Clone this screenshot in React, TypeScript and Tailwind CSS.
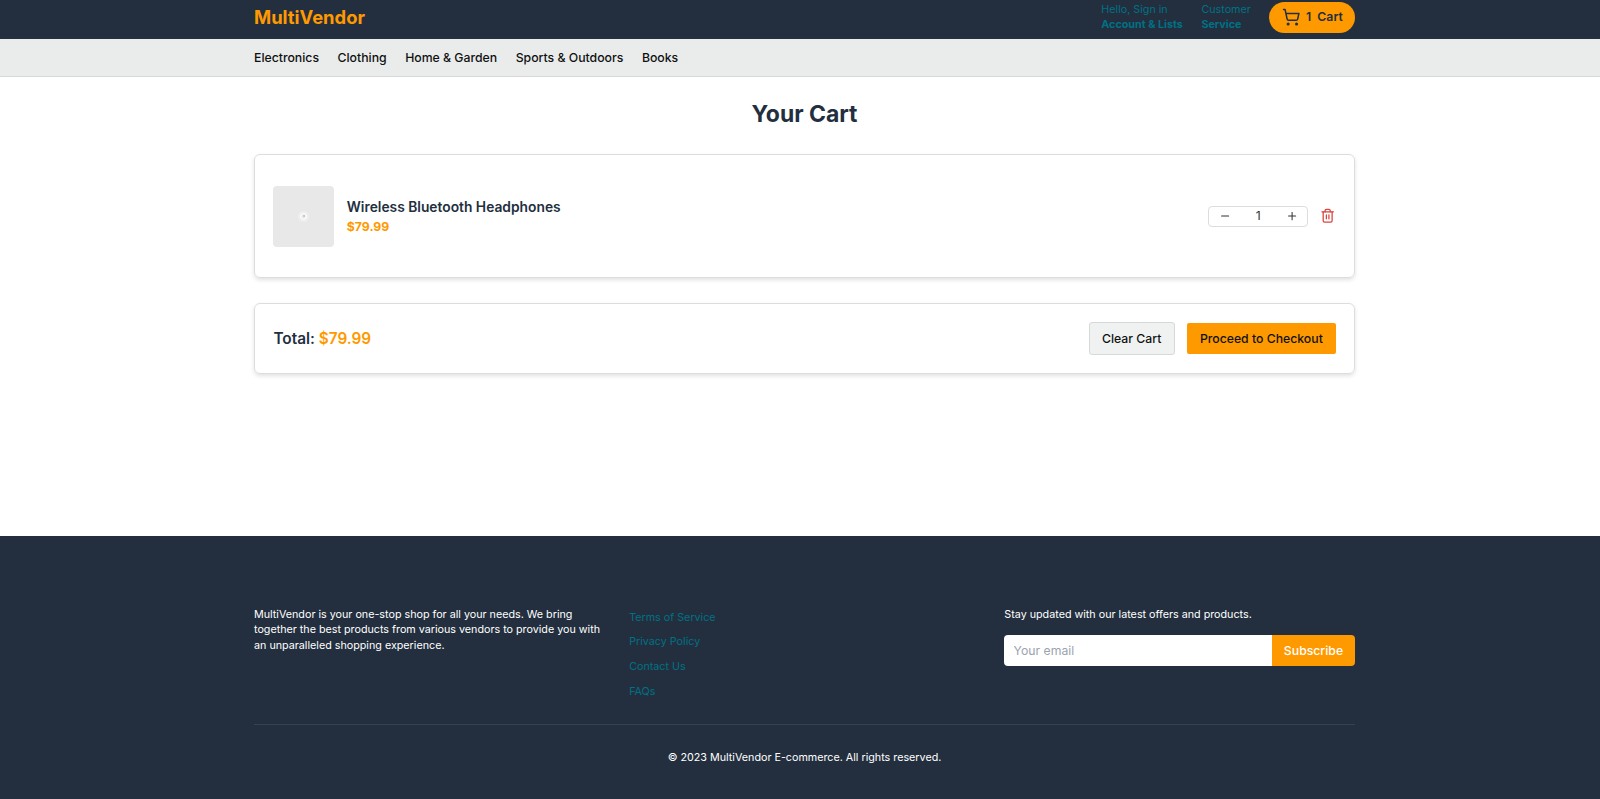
import { Minus, Plus, ShoppingCart, Trash2 } from 'lucide-react'
import React, { useState } from 'react'

const categories = [
  'Electronics',
  'Clothing',
  'Home & Garden',
  'Sports & Outdoors',
  'Books',
]

const footerLinks = ['Terms of Service', 'Privacy Policy', 'Contact Us', 'FAQs']

type ContainerProps = {
  className?: string
  children?: React.ReactNode
}

const Container = ({ className = '', children }: ContainerProps) => (
  <div className={`ml-[254px] w-[1101px] ${className}`}>{children}</div>
)

const Header = ({ count }: { count: number }) => (
  <header className="h-[38.5px] bg-[#232f3e]">
    <Container className="flex h-[34px] items-center justify-between">
      <a href="#" className="pt-[2px] text-[18.4px] font-bold text-[#ff9900]">
        MultiVendor
      </a>
      <div className="flex items-center gap-[18.6px] text-[10.74px] leading-[15.3px] text-[#007185]">
        <a href="#">
          <div>Hello, Sign in</div>
          <div className="font-bold">Account &amp; Lists</div>
        </a>
        <a href="#">
          <div>Customer</div>
          <div className="font-bold">Service</div>
        </a>
        <button className="flex h-[31px] items-center rounded-full bg-[#ff9900] px-[12.2px] text-[12.25px] font-semibold text-[#232f3e]">
          <ShoppingCart className="mr-[6.1px] size-[18.4px]" />
          <span className="mr-[6.1px]">{count}</span>
          <span>Cart</span>
        </button>
      </div>
    </Container>
  </header>
)

const CategoryNav = () => (
  <nav className="mt-[0.5px] h-[38px] border-b border-[#d5d9d9] bg-[#eaeceb]">
    <Container className="flex h-full items-center gap-[18.5px] pt-[1px] text-[12.27px] font-medium text-[#0f1111]">
      {categories.map((name) => (
        <a key={name} href="#">
          {name}
        </a>
      ))}
    </Container>
  </nav>
)

type QuantityProps = {
  value: number
  onChange: (value: number) => void
}

const Quantity = ({ value, onChange }: QuantityProps) => (
  <div className="flex h-[21px] w-[100px] items-center rounded-[4px] border border-[#dddddd] text-[#333333]">
    <button
      title="Decrease"
      onClick={() => onChange(Math.max(1, value - 1))}
      className="flex h-full w-[31px] items-center justify-center"
    >
      <Minus className="size-[12.2px]" />
    </button>
    <span className="flex-1 text-center text-[12.25px]">{value}</span>
    <button
      title="Increase"
      onClick={() => onChange(value + 1)}
      className="flex h-full w-[31px] items-center justify-center"
    >
      <Plus className="size-[12.2px]" />
    </button>
  </div>
)

const Footer = () => (
  <footer className="h-[263px] bg-[#232f3e] pt-[71px] text-[10.74px] leading-[15.3px] text-white">
    <Container>
      <div className="grid h-[118px] grid-cols-3 gap-[24.5px] border-b border-[#37475a]/80">
        <p>
          MultiVendor is your one-stop shop for all your needs. We bring
          together the best products from various vendors to provide you with an
          unparalleled shopping experience.
        </p>
        <ul className="flex flex-col gap-[9.5px] pt-[2.5px] text-[#007185]">
          {footerLinks.map((link) => (
            <li key={link}>
              <a href="#">{link}</a>
            </li>
          ))}
        </ul>
        <div>
          <p>Stay updated with our latest offers and products.</p>
          <form className="mt-[12.7px] flex h-[31px] text-[12.25px]">
            <input
              type="email"
              placeholder="Your email"
              className="min-w-0 flex-1 rounded-l-[4px] bg-white px-[9.2px] text-black placeholder:text-[#9ca3af]"
            />
            <button
              type="button"
              className="w-[83px] rounded-r-[4px] bg-[#ff9900] font-medium text-white"
            >
              Subscribe
            </button>
          </form>
        </div>
      </div>
      <p className="pt-[25px] text-center">
        © 2023 MultiVendor E-commerce. All rights reserved.
      </p>
    </Container>
  </footer>
)

const App = () => {
  const [quantity, setQuantity] = useState(1)
  const total = `$${(79.99 * quantity).toFixed(2)}`

  return (
    <div className="flex h-[799px] w-full flex-col overflow-hidden bg-white font-['Inter',sans-serif]">
      <Header count={quantity} />
      <CategoryNav />

      <main className="flex-1">
        <Container>
          <h1 className="pt-[21px] text-center text-[22.95px] leading-[32px] font-bold text-[#232f3e]">
            Your Cart
          </h1>

          <section className="mt-[24px] flex h-[124px] items-center rounded-[6px] border border-[#dddddd] px-[18.4px] shadow-[0_2px_4px_rgba(0,0,0,0.12)]">
            <div className="flex size-[61px] items-center justify-center rounded-[4px] bg-[#e8e8e8]">
              <div className="flex size-[11px] items-center justify-center rounded-full bg-[#eeeeee]">
                <div className="flex size-[7px] items-center justify-center rounded-full border border-white">
                  <div className="size-[2px] rounded-full bg-[#bdbdbd]" />
                </div>
              </div>
            </div>
            <div className="ml-[12.4px] flex-1 pt-[1px]">
              <h2 className="text-[13.8px] leading-[20.4px] font-semibold text-[#232f3e]">
                Wireless Bluetooth Headphones
              </h2>
              <p className="text-[12.25px] leading-[18.4px] font-bold text-[#ff9900]">
                $79.99
              </p>
            </div>
            <Quantity value={quantity} onChange={setQuantity} />
            <button title="Remove" className="ml-[12.2px] text-[#d9443f]">
              <Trash2 className="size-[15.3px]" />
            </button>
          </section>

          <section className="mt-[25px] flex h-[70.5px] items-center rounded-[6px] border border-[#dddddd] px-[18.4px] shadow-[0_2px_4px_rgba(0,0,0,0.12)]">
            <p className="flex-1 pt-[1px] text-[15.35px] font-semibold text-[#232f3e]">
              Total: <span className="text-[#ff9900]">{total}</span>
            </p>
            <button className="h-[32.5px] w-[86px] rounded-[3px] border border-[#d5d9d9] bg-[#f0f2f2] pt-[1px] text-[12.25px] font-medium text-[#0f1111]">
              Clear Cart
            </button>
            <button className="ml-[12.5px] h-[31px] w-[148.5px] rounded-[2px] bg-[#ff9900] pt-[1px] text-[12.25px] font-medium text-[#0f1111]">
              Proceed to Checkout
            </button>
          </section>
        </Container>
      </main>

      <Footer />
    </div>
  )
}

export default App
